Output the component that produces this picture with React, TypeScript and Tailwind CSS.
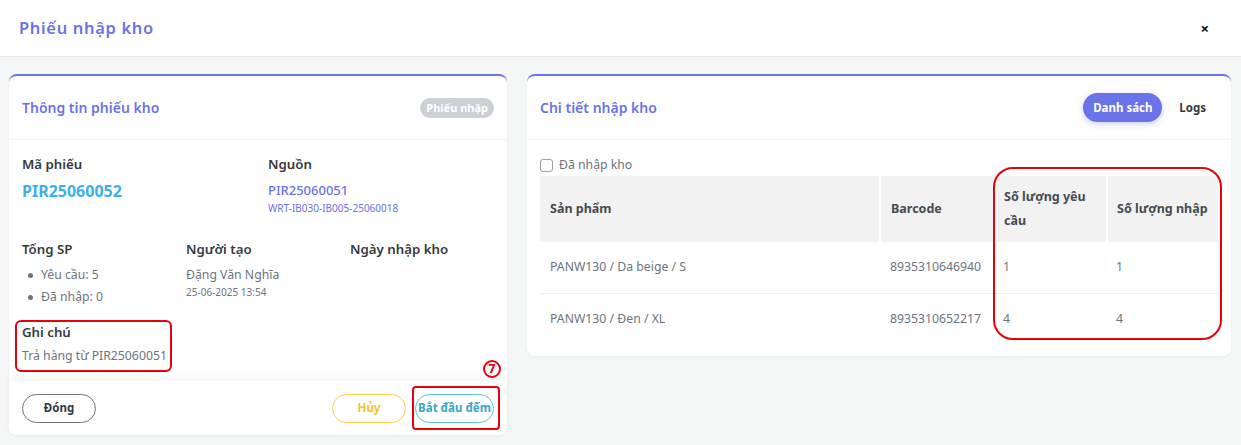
import React from 'react';

const rows = [
  { name: 'PANW130 / Da beige / S', barcode: '8935310646940', req: 1, got: 1 },
  { name: 'PANW130 / Đen / XL', barcode: '8935310652217', req: 4, got: 4 },
];

const Label: React.FC<{ children: React.ReactNode }> = ({ children }) => (
  <div className="text-[13.25px] font-semibold text-[#343a40] leading-5">{children}</div>
);

const App: React.FC = () => {
  return (
    <div className="w-[1241px] h-[445px] overflow-hidden bg-[#f5f6f6] font-['Noto_Sans',sans-serif] text-[12.25px]">
      {/* modal header */}
      <div className="h-[57px] bg-white border-b border-[#e3e5e8] flex items-center justify-between pl-[19px] pr-[32px]">
        <h1 className="text-[16.5px] font-semibold tracking-[0.04em] text-[#6b73e8]">Phiếu nhập kho</h1>
        <span className="text-[15px] font-bold text-[#111]">×</span>
      </div>

      <div className="flex gap-[20px] pt-[17px] pl-[9px]">
        {/* left card */}
        <div className="relative w-[498px] h-[361px] bg-white rounded-[8px] border-t-2 border-[#6b73e8] shadow-[0_1px_3px_rgba(0,0,0,0.05)] flex flex-col">
          <div className="h-[64px] flex items-center justify-between px-[13px] border-b border-[#f3f3f3]">
            <h2 className="text-[14px] font-semibold text-[#6b73e8]">Thông tin phiếu kho</h2>
            <span className="px-[6px] h-[20px] leading-[20px] rounded-full bg-[#cdd1d7] text-white text-[11px] font-bold">Phiếu nhập</span>
          </div>

          <div className="flex-1 px-[13px] pt-[14px]">
            <div className="grid grid-cols-[246px_246px]">
              <div>
                <Label>Mã phiếu</Label>
                <div className="mt-[5px] text-[16px] font-bold text-[#3bb0ea] leading-6">PIR25060052</div>
              </div>
              <div>
                <Label>Nguồn</Label>
                <div className="mt-[6px] text-[13px] font-medium text-[#6b73e8] leading-5">PIR25060051</div>
                <div className="text-[10px] text-[#6b73e8] leading-4">WRT-IB030-IB005-25060018</div>
              </div>
            </div>

            <div className="grid grid-cols-[164px_164px_164px] mt-[23px]">
              <div>
                <Label>Tổng SP</Label>
                <ul className="mt-[5px] pl-[6px] text-[#6c757d] leading-[22px]">
                  <li className="flex items-center gap-[8px]"><span className="w-[5px] h-[5px] rounded-full bg-[#6c757d]" />Yêu cầu: 5</li>
                  <li className="flex items-center gap-[8px]"><span className="w-[5px] h-[5px] rounded-full bg-[#6c757d]" />Đã nhập: 0</li>
                </ul>
              </div>
              <div>
                <Label>Người tạo</Label>
                <div className="mt-[5px] text-[#6c757d] leading-[22px]">Đặng Văn Nghĩa</div>
                <div className="text-[10px] text-[#6c757d] leading-3">25-06-2025 13:54</div>
              </div>
              <div>
                <Label>Ngày nhập kho</Label>
              </div>
            </div>

            <div className="mt-[14px]">
              <Label>Ghi chú</Label>
              <div className="mt-[4px] text-[#6c757d] leading-5">Trả hàng từ PIR25060051</div>
            </div>
          </div>

          <div className="h-[54px] flex items-center justify-between px-[13px] rounded-b-[8px] bg-white shadow-[0_-5px_8px_rgba(0,0,0,0.035)]">
            <button className="w-[74px] h-[29px] rounded-full border-[1.5px] border-[#6c757d] text-[11.5px] font-bold text-[#343a40]">Đóng</button>
            <div className="flex gap-[9px]">
              <button className="w-[74px] h-[29px] rounded-full border-[1.5px] border-[#ffd24d] text-[11.5px] font-bold text-[#f5c12e]">Hủy</button>
              <button className="w-[79px] h-[29px] rounded-full border-[1.5px] border-[#5bc3d6] text-[11.5px] font-bold text-[#3aa8c1]">Bắt đầu đếm</button>
            </div>
          </div>

          {/* annotations */}
          <div className="absolute left-[6px] top-[244px] w-[157px] h-[52px] rounded-[6px] border-2 border-[#e8000b]" />
          <div className="absolute left-[403px] top-[310px] w-[88px] h-[44px] rounded-[4px] border-2 border-[#e8000b]" />
          <div className="absolute left-[474px] top-[284px] w-[18px] h-[18px] rounded-full border-2 border-[#e8000b] flex items-center justify-center text-[12px] font-extrabold leading-none text-[#e8000b]">7</div>
        </div>

        {/* right card */}
        <div className="relative w-[704px] h-[282px] bg-white rounded-[8px] border-t-2 border-[#6b73e8] shadow-[0_1px_3px_rgba(0,0,0,0.05)]">
          <div className="h-[64px] flex items-center justify-between pl-[13px] pr-[25px] border-b border-[#f3f3f3]">
            <h2 className="text-[14px] font-semibold text-[#6b73e8]">Chi tiết nhập kho</h2>
            <div className="flex items-center gap-[17px]">
              <span className="w-[79px] h-[29px] rounded-full bg-[#6b73e8] text-white text-[11.5px] font-bold flex items-center justify-center shadow-[0_2px_6px_rgba(107,115,232,0.35)]">Danh sách</span>
              <span className="text-[11.5px] font-bold text-[#343a40]">Logs</span>
            </div>
          </div>

          <div className="px-[13px] pt-[17px]">
            <label className="flex items-center gap-[6px] text-[#6c757d] leading-4">
              <span className="w-[13px] h-[13px] rounded-[3px] border border-[#9aa0a6] bg-white" />
              Đã nhập kho
            </label>

            <table className="mt-[3px] w-[678px] border-collapse">
              <thead>
                <tr className="bg-[#f2f2f2] h-[66px] text-left text-[12.5px] font-bold text-[#474c51]">
                  <th className="w-[340px] pl-[10px] font-bold border-r-2 border-white">Sản phẩm</th>
                  <th className="w-[116px] pl-[10px] font-bold border-r-2 border-white">Barcode</th>
                  <th className="w-[111px] pl-[7px] pr-[8px] font-bold border-r-2 border-white leading-[24px]">Số lượng yêu cầu</th>
                  <th className="pl-[9px] font-bold">Số lượng nhập</th>
                </tr>
              </thead>
              <tbody className="text-[#6c757d]">
                {rows.map((r, i) => (
                  <tr key={i} className={`h-[51px] ${i === 0 ? 'border-b border-[#eeeeee]' : ''}`}>
                    <td className="pl-[10px]">{r.name}</td>
                    <td className="pl-[10px]">{r.barcode}</td>
                    <td className="pl-[7px]">{r.req}</td>
                    <td className="pl-[9px]">{r.got}</td>
                  </tr>
                ))}
              </tbody>
            </table>
          </div>

          <div className="absolute left-[466px] top-[91px] w-[229px] h-[173px] rounded-[20px] border-2 border-[#e8000b]" />
        </div>
      </div>
    </div>
  );
};

export default App;
